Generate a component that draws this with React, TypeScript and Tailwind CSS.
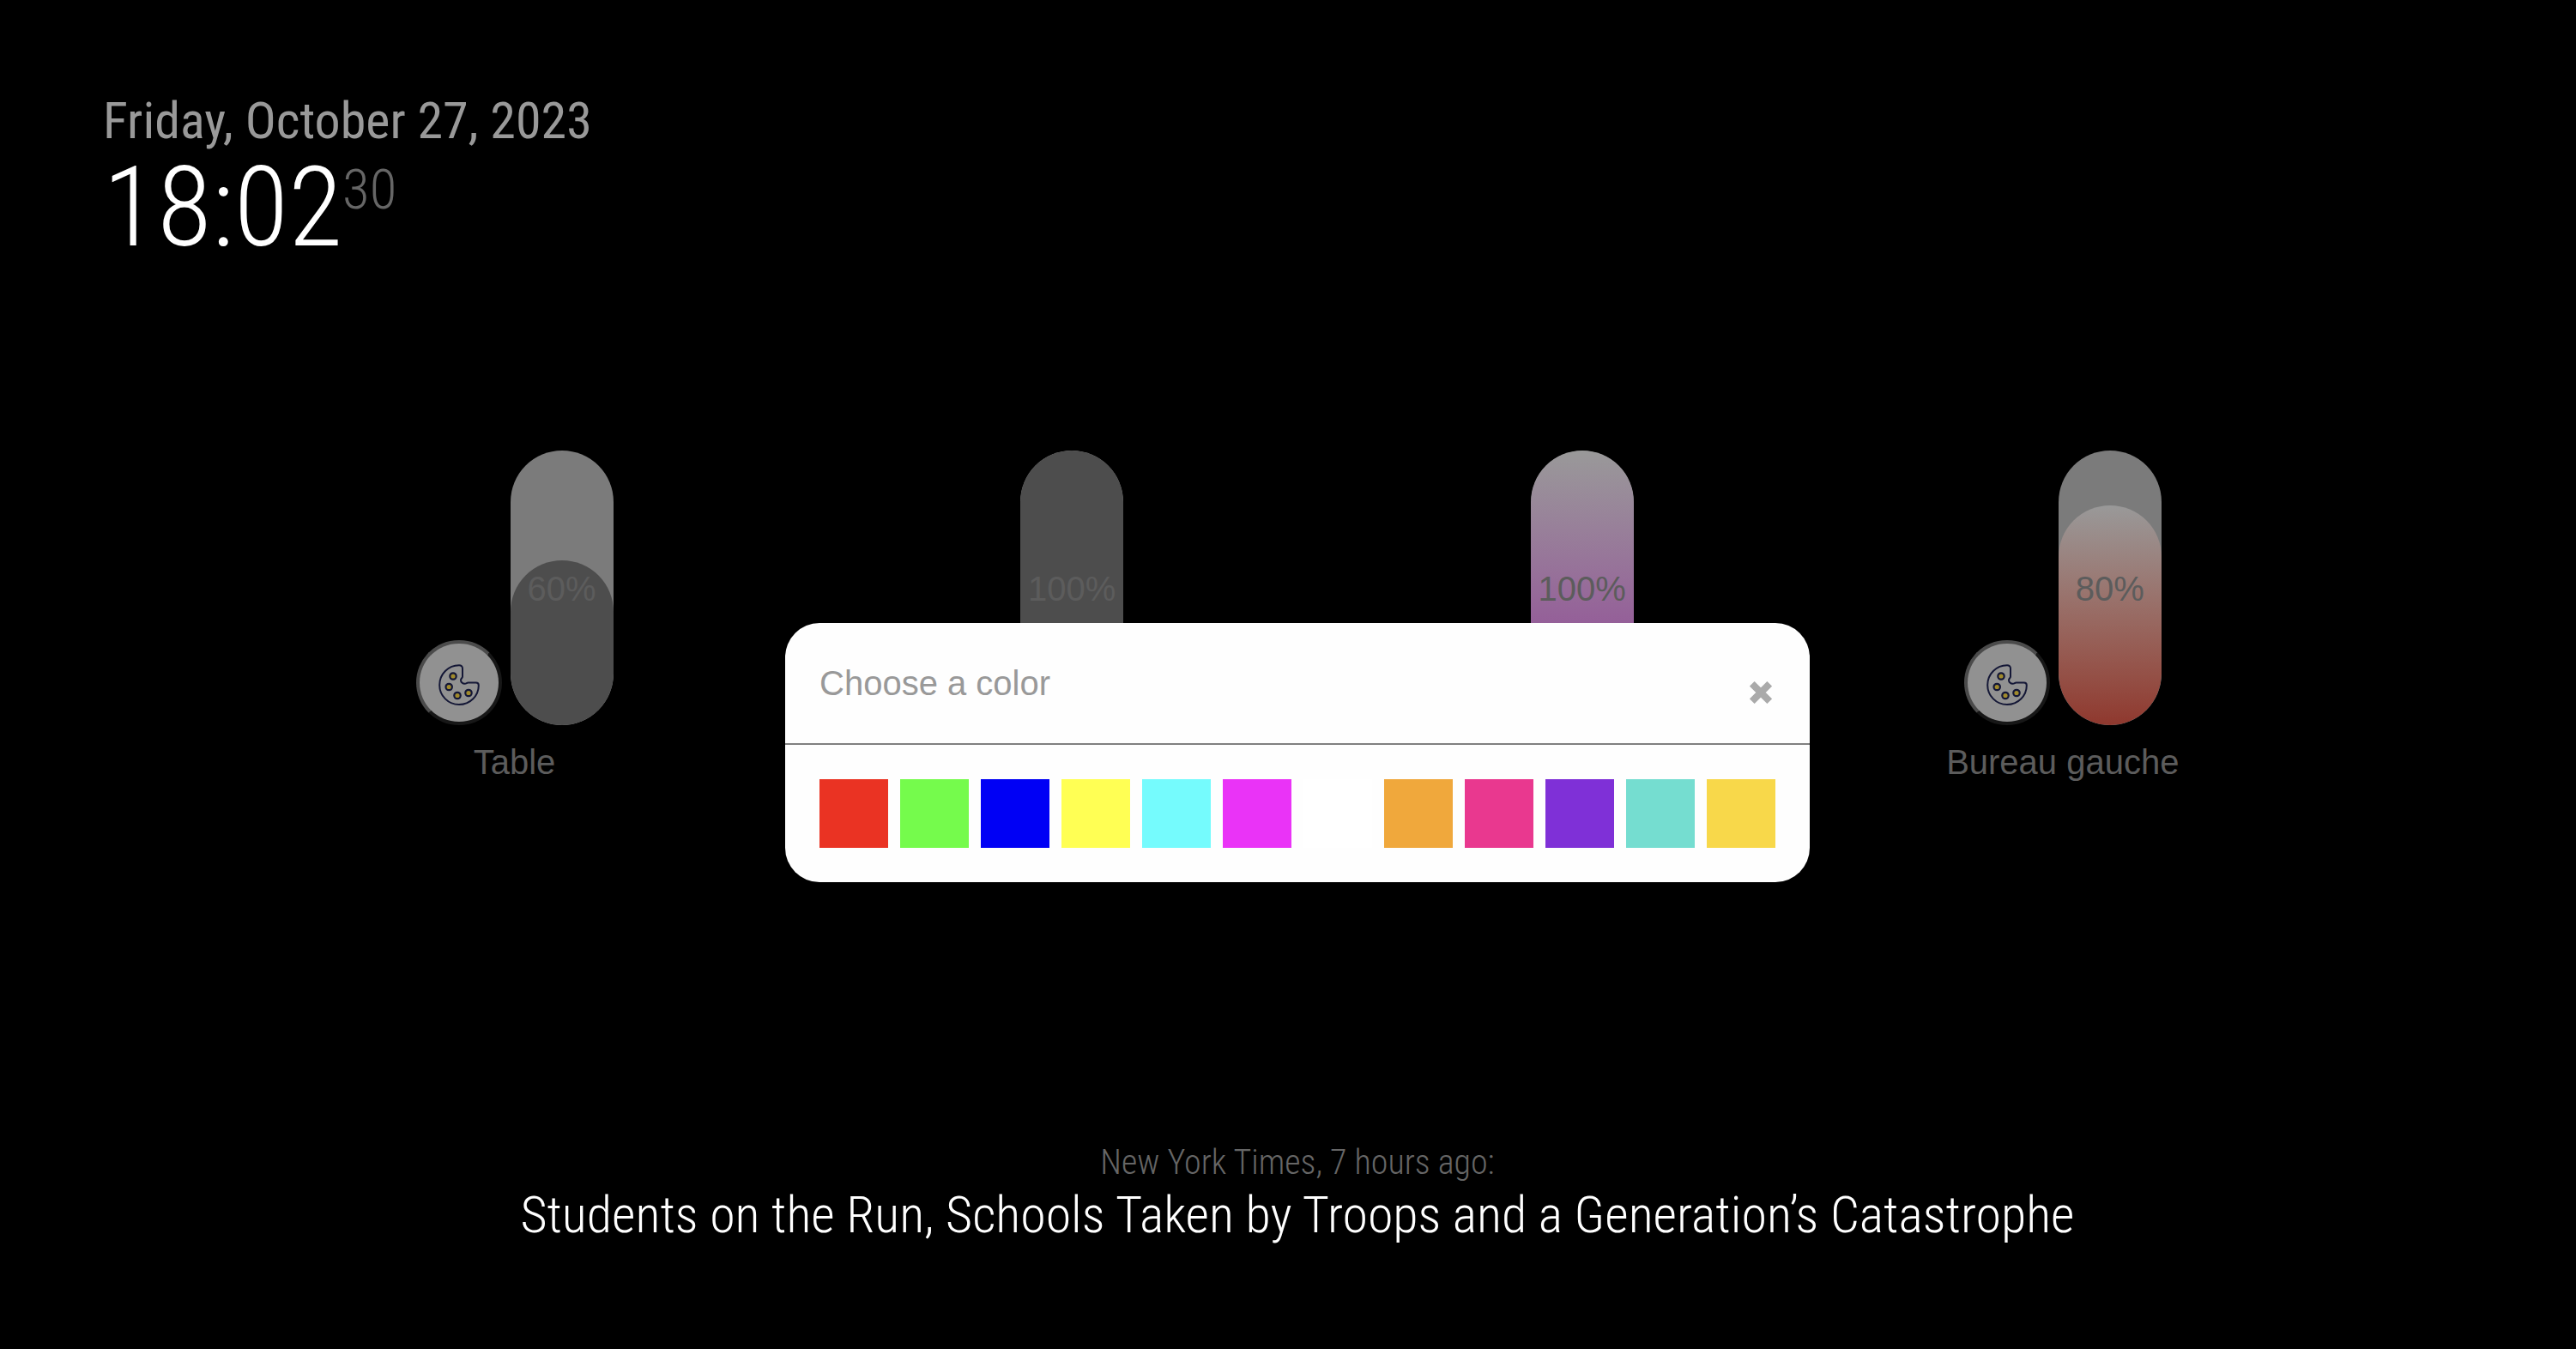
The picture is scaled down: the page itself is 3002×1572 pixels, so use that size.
import { useState } from "react";

type Light = {
  id: string;
  name?: string;
  level: number;
  fill: string;
};

const initialLights: Light[] = [
  { id: "table", name: "Table", level: 60, fill: "bg-[#4d4d4d]" },
  { id: "light-2", level: 100, fill: "bg-[#4d4d4d]" },
  { id: "light-3", level: 100, fill: "bg-linear-to-b from-[#999999] to-[#8e3796]" },
  { id: "bureau-gauche", name: "Bureau gauche", level: 80, fill: "bg-linear-to-b from-[#999999] to-[#8f382e]" },
];

const swatches = [
  { name: "Red", color: "bg-[#ea3323]" },
  { name: "Green", color: "bg-[#75fb4c]" },
  { name: "Blue", color: "bg-[#0000f5]" },
  { name: "Yellow", color: "bg-[#ffff54]" },
  { name: "Cyan", color: "bg-[#75fbfd]" },
  { name: "Magenta", color: "bg-[#ea33f7]" },
  { name: "White", color: "bg-white" },
  { name: "Orange", color: "bg-[#f0a83c]" },
  { name: "Pink", color: "bg-[#e9388f]" },
  { name: "Violet", color: "bg-[#7f30d7]" },
  { name: "Turquoise", color: "bg-[#75ddd0]" },
  { name: "Gold", color: "bg-[#f8d84a]" },
];

function PaletteIcon() {
  return (
    <svg viewBox="0 0 48 48" className="size-12" fill="none" stroke="#141736" strokeWidth="2" strokeLinejoin="round" aria-hidden="true">
      <path d="M24 1.200C11.400 1.200 1.200 11.500 1.200 24.200S11.400 47 24 47s22.800-10 22.800-22.300c0-1.900-1-3.200-3-3.200H34.500c-1.600 0-1.900 1.200-3.900 1.200-2.500 0-4.600-1.900-4.600-4.300 0-1.700 2-2.100 2-3.900V5c0-2.300-1.500-3.800-4-3.800Z" />
      <g fill="#a08a2c" strokeWidth="2.200">
        <circle cx="17" cy="14" r="3.700" />
        <circle cx="12.200" cy="26.500" r="3.700" />
        <circle cx="22" cy="36.500" r="3.700" />
        <circle cx="35" cy="33.500" r="3.700" />
      </g>
    </svg>
  );
}

function LightControl({ light, onLevel }: { light: Light; onLevel: (level: number) => void }) {
  const label = light.name ?? "Light";
  return (
    <div className="flex min-w-[230px] flex-col items-center gap-[13px]">
      <div className="flex items-end gap-[10px]">
        <button
          type="button"
          aria-label={`Color of ${label}`}
          className="flex h-[99px] w-[100px] items-center justify-center rounded-full border-4 border-t-[#4b4b4b] border-r-[#171717] border-b-[#171717] border-l-[#4b4b4b] bg-[#919191] pt-1"
        >
          <PaletteIcon />
        </button>
        <div className="relative flex h-80 w-[120px] flex-col justify-end overflow-hidden rounded-full bg-[#7b7b7b]">
          <div className={`rounded-full ${light.fill}`} style={{ height: `${light.level}%` }} />
          <span className="absolute inset-0 flex items-center justify-center pt-0.5">{light.level}%</span>
          <input
            type="range"
            min={0}
            max={100}
            value={light.level}
            onChange={(e) => onLevel(Number(e.target.value))}
            aria-label={`Brightness of ${label}`}
            className="absolute inset-0 size-full opacity-0 [direction:rtl] [writing-mode:vertical-lr]"
          />
        </div>
      </div>
      {light.name && <p>{light.name}</p>}
    </div>
  );
}

export default function App() {
  const [lights, setLights] = useState(initialLights);

  const setLevel = (id: string, level: number) =>
    setLights((all) => all.map((l) => (l.id === id ? { ...l, level } : l)));

  return (
    <div className="relative flex min-h-screen flex-col bg-black pt-[105px] pr-[98px] pb-[121px] pl-[120px] font-['Roboto_Condensed','Roboto',sans-serif]">
      <header>
        <p className="text-[60px] leading-[72px] text-[#999999]">Friday, October 27, 2023</p>
        <p className="flex items-start text-[130px] leading-[130px] font-light text-white">
          18:02
          <span className="text-[65px] leading-[88px] text-[#666666]">30</span>
        </p>
      </header>

      <main className="mt-[218px] flex items-start justify-evenly font-['Liberation_Sans',Arial,sans-serif] text-[40px] leading-[60px] text-[#5c5c5c]">
        {lights.map((light) => (
          <LightControl key={light.id} light={light} onLevel={(level) => setLevel(light.id, level)} />
        ))}
      </main>

      <footer className="mt-auto text-center font-light">
        <p className="text-[40px] leading-[52px] text-[#666666]">New York Times, 7 hours ago:</p>
        <p className="text-[60px] leading-[70px] text-white">
          Students on the Run, Schools Taken by Troops and a Generation’s Catastrophe
        </p>
      </footer>

      <div className="absolute inset-x-0 top-[726px] flex justify-center pl-[22px]">
        <section
          role="dialog"
          aria-labelledby="color-title"
          className="overflow-hidden rounded-[40px] bg-[#fefefe] font-['Liberation_Sans',Arial,sans-serif]"
        >
          <div className="flex justify-between border-b-2 border-[#808080] p-10">
            <h2 id="color-title" className="text-[40px] leading-[60px] text-[#999999]">
              Choose a color
            </h2>
            <button type="button" aria-label="Close" className="flex h-[60px] w-[34px] items-end justify-center pb-1.5">
              <svg viewBox="0 0 26 26" className="size-[26px]" stroke="#aaaaaa" strokeWidth="8" aria-hidden="true">
                <path d="M2.800 2.800 23.200 23.200M23.200 2.800 2.800 23.200" />
              </svg>
            </button>
          </div>
          <div className="flex gap-[14px] p-10">
            {swatches.map((s) => (
              <button key={s.name} type="button" aria-label={s.name} className={`size-20 ${s.color}`} />
            ))}
          </div>
        </section>
      </div>
    </div>
  );
}
